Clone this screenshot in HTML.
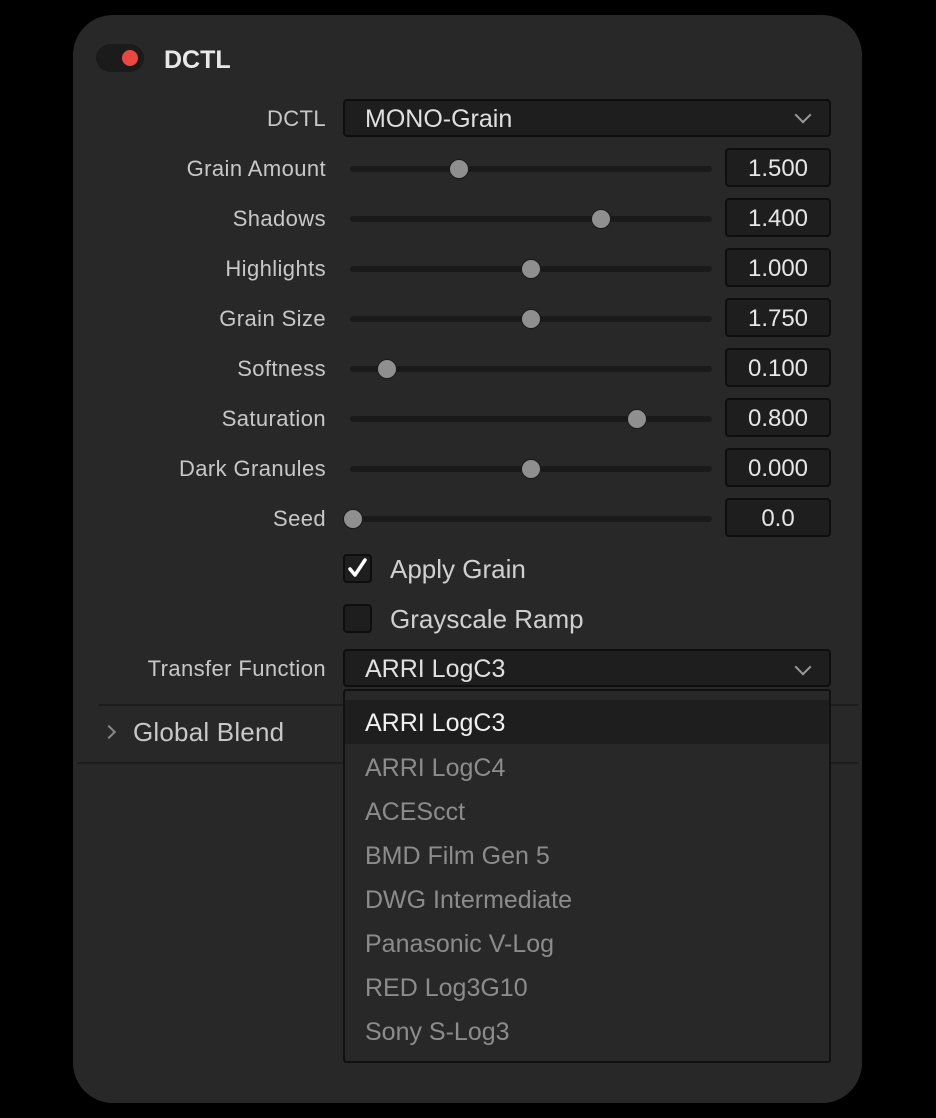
<!DOCTYPE html>
<html><head><meta charset="utf-8"><style>
*{box-sizing:border-box;margin:0;padding:0}
body{width:936px;height:1118px;background:#000;font-family:"Liberation Sans",sans-serif;position:relative;overflow:hidden}
.panel{position:absolute;left:73px;top:15px;width:789px;height:1088px;background:#282828;border-radius:40px}
.a{position:absolute}
.lbl{position:absolute;right:610px;font-size:22px;letter-spacing:0.4px;color:#c8c8c8;white-space:nowrap;line-height:24px;margin-top:-2px}
.track{position:absolute;left:350px;width:362px;height:6px;background:#1a1a1a;border-radius:3px}
.thumb{position:absolute;width:20px;height:20px;border-radius:50%;background:#8f8f8f;border:1px solid #1a1a1a}
.val{position:absolute;left:725px;width:106px;height:39px;background:#1e1e1e;border:2px solid #0e0e0e;border-radius:4px;color:#e6e6e6;font-size:24px;text-align:center;line-height:38px}
.dd{position:absolute;left:343px;width:488px;height:38px;background:#1e1e1e;border:2px solid #0e0e0e;border-radius:4px;color:#e0e0e0;font-size:25px;line-height:36px;padding-left:20px}
.chev{position:absolute;right:20px;top:11px;width:12px;height:12px;border-right:2px solid #999;border-bottom:2px solid #999;transform:rotate(45deg) scale(1,1)}
.cb{position:absolute;left:343px;width:29px;height:29px;background:#1e1e1e;border:2px solid #0e0e0e;border-radius:4px}
.cbt{position:absolute;left:390px;font-size:26px;color:#d0d0d0;line-height:32px}
.item{position:absolute;left:0;width:100%;height:44px;font-size:25px;line-height:46px;padding-left:20px;color:#8c8c8c}
</style></head><body>
<div class="panel"></div>
<div class="a" style="left:96px;top:44px;width:48px;height:28px;border-radius:14px;background:#1b1b1b"></div>
<div class="a" style="left:122px;top:50px;width:16px;height:16px;border-radius:50%;background:#e8483f"></div>
<div class="a" style="left:164px;top:45px;font-size:25px;font-weight:bold;color:#e8e8e8;line-height:30px">DCTL</div>

<div class="lbl" style="top:109px">DCTL</div>
<div class="dd" style="top:99px">MONO-Grain<div class="chev" style="top:8px"></div></div>

<div class="lbl" style="top:159px">Grain Amount</div><div class="track" style="top:166px"></div><div class="thumb" style="left:449px;top:159px"></div><div class="val" style="top:148px">1.500</div>
<div class="lbl" style="top:209px">Shadows</div><div class="track" style="top:216px"></div><div class="thumb" style="left:591px;top:209px"></div><div class="val" style="top:198px">1.400</div>
<div class="lbl" style="top:259px">Highlights</div><div class="track" style="top:266px"></div><div class="thumb" style="left:521px;top:259px"></div><div class="val" style="top:248px">1.000</div>
<div class="lbl" style="top:309px">Grain Size</div><div class="track" style="top:316px"></div><div class="thumb" style="left:521px;top:309px"></div><div class="val" style="top:298px">1.750</div>
<div class="lbl" style="top:359px">Softness</div><div class="track" style="top:366px"></div><div class="thumb" style="left:377px;top:359px"></div><div class="val" style="top:348px">0.100</div>
<div class="lbl" style="top:409px">Saturation</div><div class="track" style="top:416px"></div><div class="thumb" style="left:627px;top:409px"></div><div class="val" style="top:398px">0.800</div>
<div class="lbl" style="top:459px">Dark Granules</div><div class="track" style="top:466px"></div><div class="thumb" style="left:521px;top:459px"></div><div class="val" style="top:448px">0.000</div>
<div class="lbl" style="top:509px">Seed</div><div class="track" style="top:516px"></div><div class="thumb" style="left:343px;top:509px"></div><div class="val" style="top:498px">0.0</div>

<div class="cb" style="top:554px"><svg width="25" height="25" style="position:absolute;left:0;top:0"><path d="M5 13 L10 19 L20 4" stroke="#fff" stroke-width="3.5" fill="none" stroke-linecap="round" stroke-linejoin="round"/></svg></div>
<div class="cbt" style="top:553px">Apply Grain</div>
<div class="cb" style="top:604px"></div>
<div class="cbt" style="top:603px">Grayscale Ramp</div>

<div class="lbl" style="top:659px">Transfer Function</div>
<div class="dd" style="top:649px">ARRI LogC3<div class="chev" style="top:10px"></div></div>

<div class="a" style="left:98px;top:704px;width:760px;height:2px;background:#1e1e1e"></div>
<div class="a" style="left:77px;top:762px;width:781px;height:2px;background:#1e1e1e"></div>
<div class="a" style="left:104px;top:727px;width:10px;height:10px;border-right:2px solid #888;border-top:2px solid #888;transform:rotate(45deg)"></div>
<div class="a" style="left:133px;top:716px;font-size:26px;color:#c8c8c8;line-height:32px;letter-spacing:0.2px">Global Blend</div>

<div class="a" style="left:343px;top:689px;width:488px;height:374px;background:#282828;border:2px solid #111;border-radius:3px">
<div class="item" style="top:9px;background:#1e1e1e;color:#f0f0f0">ARRI LogC3</div>
<div class="item" style="top:54px">ARRI LogC4</div>
<div class="item" style="top:98px">ACEScct</div>
<div class="item" style="top:142px">BMD Film Gen 5</div>
<div class="item" style="top:186px">DWG Intermediate</div>
<div class="item" style="top:230px">Panasonic V-Log</div>
<div class="item" style="top:274px">RED Log3G10</div>
<div class="item" style="top:318px">Sony S-Log3</div>
</div>
</body></html>
